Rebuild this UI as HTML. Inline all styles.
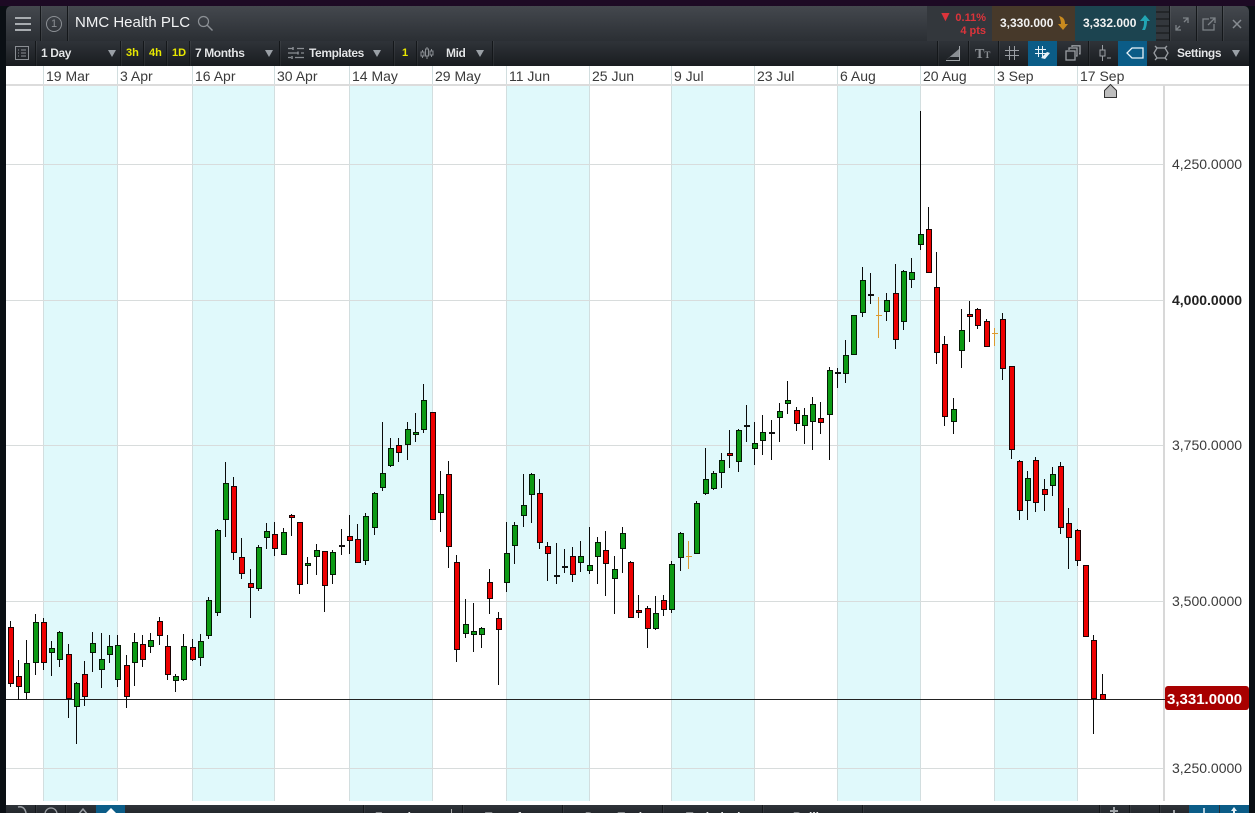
<!DOCTYPE html>
<html><head><meta charset="utf-8"><title>NMC Health PLC</title>
<style>
html,body{margin:0;padding:0;width:1255px;height:813px;overflow:hidden;background:#0a0f14;font-family:"Liberation Sans",sans-serif}
#top{position:absolute;left:0;top:0;width:1255px;height:6px;background:#1d0a24}
#hdr{position:absolute;left:6px;top:6px;width:1243px;height:35px;background:linear-gradient(#44484e,#2b2f34);border-radius:5px 5px 0 0;overflow:hidden}
#tb{position:absolute;left:6px;top:41px;width:1243px;height:25px;background:linear-gradient(#2f3339,#191c20)}
#plot{position:absolute;left:6px;top:66px;width:1243px;height:739px;background:#fff}
#bot{position:absolute;left:6px;top:805px;width:1243px;height:8px;background:linear-gradient(#2e3339,#24282d);overflow:hidden}
.a{position:absolute}
.sp{position:absolute;top:0;width:1px;height:100%;background:#14171a;box-shadow:1px 0 0 rgba(255,255,255,.06)}
.t{position:absolute;white-space:nowrap;color:#e4e6e8;font-size:12px;font-weight:bold;line-height:14px;letter-spacing:-.4px;text-shadow:0 0 1px #000}
.y{position:absolute;white-space:nowrap;color:#e8e800;font-size:11px;font-weight:bold;line-height:14px}
.blue{position:absolute;top:0;background:#0b5c87;height:100%}
.tri{position:absolute;width:0;height:0;border-left:4px solid transparent;border-right:4px solid transparent;border-top:7px solid #9aa0a6}
.b{position:absolute;top:5px;white-space:nowrap;color:#e8eaec;font-size:12px;font-weight:bold;line-height:14px}
svg{position:absolute;left:0;top:0;overflow:visible}
</style></head><body>
<div id="top"></div>

<div id="hdr">
 <div class="a" style="left:9px;top:11px;width:16px;height:2px;background:#a8acb0"></div>
 <div class="a" style="left:9px;top:17px;width:16px;height:2px;background:#a8acb0"></div>
 <div class="a" style="left:9px;top:23px;width:16px;height:2px;background:#a8acb0"></div>
 <div class="sp" style="left:34px"></div>
 <div class="a" style="left:40px;top:10px;width:14px;height:14px;border:1px solid #8c9095;border-radius:50%;color:#8c9095;font-size:11px;line-height:14px;text-align:center">1</div>
 <div class="sp" style="left:61px"></div>
 <div class="a" style="left:69px;top:8px;color:#f2f3f4;font-size:15px;line-height:18px;white-space:nowrap">NMC Health PLC</div>
 <svg width="20" height="20" style="left:191px;top:9px" viewBox="0 0 20 20"><circle cx="6.5" cy="6.5" r="5" fill="none" stroke="#8c9095" stroke-width="1.2"/><path d="M10 10l5.5 5.5" stroke="#8c9095" stroke-width="1.4" fill="none"/></svg>

 <div class="a" style="left:921px;top:0;width:65px;height:35px;background:#33373c"></div>
 <div class="a" style="left:986px;top:0;width:83px;height:35px;background:#47392a"></div>
 <div class="a" style="left:1069px;top:0;width:81px;height:35px;background:#1c4450"></div>
 <div class="a" style="left:1150px;top:0;width:13px;height:35px;background:repeating-linear-gradient(#33373c 0 5px,#232629 5px 7px)"></div>
 <div class="a" style="left:929px;top:4px;width:51px;text-align:right;color:#dc343b;font-size:11px;font-weight:bold;line-height:13px;white-space:nowrap"><span style="font-size:14px;line-height:13px">▼</span> 0.11%<br>4 pts</div>
 <div class="a" style="left:994px;top:10px;color:#f2f2f2;font-size:12px;font-weight:bold;line-height:15px;white-space:nowrap">3,330.000</div>
 <svg width="12" height="16" style="left:1051px;top:9px" viewBox="0 0 12 16"><path d="M2 1c4 1 6 3 6 8h3l-5 6-5-6h3c0-3-1-6-2-8z" fill="#c98a1e"/></svg>
 <div class="a" style="left:1077px;top:10px;color:#f2f2f2;font-size:12px;font-weight:bold;line-height:15px;white-space:nowrap">3,332.000</div>
 <svg width="12" height="16" style="left:1133px;top:9px" viewBox="0 0 12 16"><path d="M6 0l5 6H8c0 4-1 7-2 9H3c2-3 2-6 2-9H1z" fill="#22a6b4"/></svg>
 <div class="sp" style="left:1163px"></div><div class="sp" style="left:1190px"></div><div class="sp" style="left:1216px"></div>
 <svg width="14" height="14" style="left:1169px;top:11px" viewBox="0 0 14 14"><path d="M8 1h5v5M13 1L9 5M6 13H1V8M1 13l4-4" fill="none" stroke="#7d8287" stroke-width="1.3"/></svg>
 <svg width="14" height="14" style="left:1196px;top:11px" viewBox="0 0 14 14"><path d="M7 2H1v11h11V7M8 1h5v5M13 1L6 8" fill="none" stroke="#7d8287" stroke-width="1.3"/></svg>
 <svg width="10" height="10" style="left:1226px;top:13px" viewBox="0 0 10 10"><path d="M1 1l8 8M9 1l-8 8" stroke="#878c91" stroke-width="1.5"/></svg>
</div>

<div id="tb">
 <svg width="14" height="14" style="left:9px;top:5px" viewBox="0 0 14 14"><rect x=".5" y=".5" width="13" height="13" fill="none" stroke="#8a8e93"/><path d="M3 4h1M6 4h5M3 7h1M6 7h5M3 10h1M6 10h5" stroke="#8a8e93"/></svg>
 <div class="sp" style="left:29px"></div>
 <div class="t" style="left:35px;top:5px">1 Day</div>
 <div class="tri" style="left:102px;top:9px"></div>
 <div class="sp" style="left:114px"></div>
 <div class="y" style="left:120px;top:5px">3h</div>
 <div class="sp" style="left:137px"></div>
 <div class="y" style="left:143px;top:5px">4h</div>
 <div class="sp" style="left:160px"></div>
 <div class="y" style="left:166px;top:5px">1D</div>
 <div class="sp" style="left:183px"></div>
 <div class="t" style="left:189px;top:5px">7 Months</div>
 <div class="tri" style="left:259px;top:9px"></div>
 <div class="sp" style="left:273px"></div>
 <svg width="16" height="14" style="left:282px;top:5px" viewBox="0 0 16 14"><path d="M0 2.500h5M9 2.500h7M0 7h10M13 7h3M0 11.500h3M7 11.500h9" stroke="#8a8e93" stroke-width="1.200"/><path d="M5 1v3M10 5.500v3M4 10v3" stroke="#8a8e93" stroke-width="1.500"/></svg>
 <div class="t" style="left:303px;top:5px">Templates</div>
 <div class="tri" style="left:367px;top:9px"></div>
 <div class="sp" style="left:387px"></div>
 <div class="y" style="left:396px;top:5px">1</div>
 <div class="sp" style="left:410px"></div>
 <svg width="16" height="16" style="left:413px;top:4px" viewBox="0 0 16 16"><path d="M3.500 5v8M8 2v12M12.500 4v8" stroke="#8a8e93"/><rect x="2" y="7" width="3" height="4" fill="#2a2e33" stroke="#8a8e93"/><rect x="6.500" y="4" width="3" height="7" fill="#2a2e33" stroke="#8a8e93"/><rect x="11" y="6" width="3" height="4" fill="#2a2e33" stroke="#8a8e93"/></svg>
 <div class="t" style="left:440px;top:5px">Mid</div>
 <div class="tri" style="left:470px;top:9px"></div>
 <div class="sp" style="left:486px"></div>

 <div class="sp" style="left:931px"></div><div class="sp" style="left:962px"></div><div class="sp" style="left:992px"></div>
 <div class="blue" style="left:1022px;width:29px"></div>
 <div class="sp" style="left:1082px"></div>
 <div class="blue" style="left:1112px;width:29px"></div>
 <svg width="16" height="16" style="left:939px;top:4px" viewBox="0 0 16 16"><path d="M1 15L14 4v8H5z" fill="#8a8e93"/><path d="M1 15.500h14M14.500 1v14" fill="none" stroke="#a0a4a8"/></svg>
 <div class="a" style="left:969px;top:5px;color:#8c9095;font-size:14px;font-weight:bold;font-family:'Liberation Serif',serif;line-height:17px;white-space:nowrap">T<span style="font-size:9px">T</span></div>
 <svg width="16" height="16" style="left:998px;top:4px" viewBox="0 0 16 16"><path d="M5.500 1v14M10.500 1v14M1 5.500h14M1 10.500h14" stroke="#9a9ea3"/></svg>
 <svg width="18" height="16" style="left:1028px;top:4px" viewBox="0 0 18 16"><path d="M4.500 1v11M8.500 1v11M1 4.500h11M1 8.500h11" stroke="#e8f2f8"/><path d="M7 13l6-6 3 1-5 6z" fill="#e8f2f8"/></svg>
 <svg width="16" height="16" style="left:1059px;top:4px" viewBox="0 0 16 16"><rect x="1" y="6" width="9" height="9" fill="none" stroke="#9a9ea3" stroke-width="1.300"/><path d="M4 5V3h8v8h-1M7 2V.8h8v8h-1" fill="none" stroke="#9a9ea3" stroke-width="1.300"/></svg>
 <svg width="16" height="18" style="left:1091px;top:3px" viewBox="0 0 16 18"><path d="M5.500 1v16" stroke="#9a9ea3"/><rect x="3" y="6" width="5" height="6" fill="#2a2e33" stroke="#9a9ea3"/><path d="M10 14h4" stroke="#9a9ea3"/></svg>
 <svg width="20" height="14" style="left:1119px;top:5px" viewBox="0 0 20 14"><path d="M18 2H7L2 7l5 5h11z" fill="none" stroke="#e8f2f8" stroke-width="1.300"/></svg>
 <svg width="16" height="16" style="left:1147px;top:4px" viewBox="0 0 16 16"><path d="M4 3h8l3 5-3 5H4L1 8z" fill="none" stroke="#9a9ea3" stroke-width="1.300"/><path d="M4 3L2 1M12 3l2-2M4 13l-2 2M12 13l2 2" stroke="#9a9ea3" stroke-width="1.300"/></svg>
 <div class="t" style="left:1171px;top:5px">Settings</div>
 <div class="tri" style="left:1226px;top:9px"></div>
</div>

<div id="plot"></div>
<svg width="1255" height="813" viewBox="0 0 1255 813" style="left:0;top:0">
 <g fill="#e0f9fb">
  <rect x="43" y="85" width="75" height="716"/><rect x="192" y="85" width="83" height="716"/><rect x="349" y="85" width="84" height="716"/><rect x="506" y="85" width="84" height="716"/><rect x="671" y="85" width="84" height="716"/><rect x="837" y="85" width="84" height="716"/><rect x="994" y="85" width="84" height="716"/>
 </g>
 <path d="M43.500 66V801M117.500 66V801M192.500 66V801M274.500 66V801M349.500 66V801M432.500 66V801M506.500 66V801M589.500 66V801M671.500 66V801M754.500 66V801M837.500 66V801M920.500 66V801M994.500 66V801M1077.500 66V801" stroke="#d2dedf" fill="none"/>
 <path d="M6 164.500H1164M6 300.500H1164M6 445.500H1164M6 601.500H1164M6 768.500H1164" stroke="#d8dcdc" fill="none"/>
 <rect x="6" y="84" width="1243" height="2" fill="#dcdcdc"/>
 <rect x="1163" y="85" width="2" height="716" fill="#d8d8d8"/>
 <path d="M6 699.500H1165" stroke="#222" fill="none"/>

 <path fill="none" stroke="#0a0a0a" d="M10.500 621V687M18.500 660V700M26.500 640V699M35.500 614V675M43.500 618V670M51.500 641V676M59.500 631V667M68.500 644V718M76.500 682V744M84.500 661V706M92.500 632V672M101.500 633V688M109.500 635V663M117.500 635V687M126.500 655V708M134.500 633V686M142.500 635V667M150.500 633V653M159.500 617V645M167.500 635V680M175.500 674V692M183.500 634V681M192.500 639V661M200.500 634V666M208.500 597V639M217.500 529V616M225.500 462V537M233.500 477V560M241.500 538V579M250.500 569V618M258.500 545V591M266.500 523V549M274.500 522V556M283.500 528V555M291.500 514V536M299.500 522V594M307.500 557V584M316.500 544V575M324.500 551V612M332.500 550V584M341.500 529V555M349.500 515V554M357.500 524V563M365.500 513V565M374.500 492V535M382.500 422V491M390.500 438V467M398.500 438V462M407.500 422V460M415.500 413V442M423.500 384V433M432.500 412V520M440.500 471V532M448.500 461V568M456.500 555V662M465.500 599V638M473.500 603V652M481.500 627V648M489.500 569V614M498.500 612V685M506.500 522V592M514.500 522V564M523.500 474V527M531.500 473V523M539.500 479V549M547.500 542V581M556.500 543V584M564.500 549V573M572.500 547V582M580.500 541V572M589.500 527V574M597.500 537V584M605.500 531V596M614.500 556V614M622.500 527V573M630.500 561V618M638.500 595V618M647.500 606V648M655.500 596V630M663.500 595V616M671.500 561V613M680.500 532V571M696.500 501V554M705.500 448V495M713.500 471V490M721.500 453V488M729.500 430V468M738.500 429V472M746.500 405V442M754.500 422V465M762.500 415V455M771.500 420V460M779.500 403V442M787.500 381V414M796.500 407V431M804.500 408V444M812.500 397V450M820.500 402V434M829.500 367V460M837.500 368V388M845.500 340V383M853.500 315V355M862.500 267V317M870.500 273V304M886.500 293V321M895.500 264V349M903.500 270V330M911.500 258V288M920.500 111V250M928.500 207V273M936.500 252V364M944.500 336V426M953.500 398V434M961.500 309V368M969.500 301V342M977.500 308V329M986.500 319V347M1002.500 313V380M1011.500 366V459M1019.500 460V520M1027.500 471V520M1035.500 457V512M1044.500 479V511M1052.500 467V496M1060.500 462V534M1068.500 508V569M1077.500 529V566M1085.500 565V637M1093.500 635V734M1102.500 674V700"/>

 <path fill="none" stroke="#dc9a30" d="M688.500 541V569M686 556.500H692M878.500 297V338M876 315.500H882M994.500 328V346M992 333.500H998"/>

 <path fill="#ee0000" stroke="#1a0505" d="M8.500 627.500h5V683.500h-5zM16.500 676.500h5V686.500h-5zM41.500 622.500h5V662.500h-5zM66.500 654.500h5V698.500h-5zM82.500 674.500h5V696.500h-5zM124.500 665.500h5V696.500h-5zM140.500 644.500h5V659.500h-5zM157.500 621.500h5V635.500h-5zM165.500 646.500h5V674.500h-5zM190.500 647.500h5V659.500h-5zM231.500 486.500h5V552.500h-5zM239.500 557.500h5V573.500h-5zM248.500 583.500h5V587.500h-5zM272.500 534.500h5V548.500h-5zM289.500 515.500h5V517.500h-5zM297.500 522.500h5V584.500h-5zM322.500 551.500h5V585.500h-5zM347.500 536.500h5V540.500h-5zM355.500 539.500h5V562.500h-5zM396.500 445.500h5V452.500h-5zM430.500 412.500h5V519.500h-5zM446.500 474.500h5V546.500h-5zM454.500 562.500h5V649.500h-5zM487.500 582.500h5V598.500h-5zM496.500 618.500h5V629.500h-5zM537.500 493.500h5V542.500h-5zM545.500 546.500h5V553.500h-5zM570.500 556.500h5V574.500h-5zM603.500 550.500h5V563.500h-5zM628.500 562.500h5V617.500h-5zM636.500 610.500h5V612.500h-5zM645.500 608.500h5V628.500h-5zM661.500 600.500h5V609.500h-5zM727.500 453.500h5V455.500h-5zM794.500 410.500h5V423.500h-5zM818.500 418.500h5V422.500h-5zM893.500 293.500h5V339.500h-5zM926.500 229.500h5V272.500h-5zM934.500 287.500h5V352.500h-5zM942.500 344.500h5V416.500h-5zM967.500 314.500h5V316.500h-5zM975.500 309.500h5V325.500h-5zM984.500 321.500h5V346.500h-5zM1000.500 319.500h5V368.500h-5zM1009.500 366.500h5V449.500h-5zM1017.500 461.500h5V510.500h-5zM1033.500 460.500h5V502.500h-5zM1042.500 489.500h5V494.500h-5zM1058.500 466.500h5V527.500h-5zM1066.500 523.500h5V537.500h-5zM1075.500 530.500h5V560.500h-5zM1083.500 565.500h5V636.500h-5zM1091.500 640.500h5V698.500h-5zM1100.500 694.500h5V699.500h-5z"/>

 <path fill="#0c9a14" stroke="#051a05" d="M24.500 663.500h5V692.500h-5zM33.500 622.500h5V662.500h-5zM49.500 648.500h5V652.500h-5zM57.500 632.500h5V659.500h-5zM74.500 683.500h5V706.500h-5zM90.500 643.500h5V652.500h-5zM99.500 659.500h5V669.500h-5zM107.500 646.500h5V654.500h-5zM115.500 645.500h5V679.500h-5zM132.500 642.500h5V662.500h-5zM148.500 640.500h5V646.500h-5zM173.500 676.500h5V680.500h-5zM181.500 646.500h5V679.500h-5zM198.500 641.500h5V657.500h-5zM206.500 600.500h5V635.500h-5zM215.500 530.500h5V612.500h-5zM223.500 483.500h5V519.500h-5zM256.500 547.500h5V588.500h-5zM264.500 531.500h5V537.500h-5zM281.500 532.500h5V554.500h-5zM305.500 563.500h5V565.500h-5zM314.500 550.500h5V556.500h-5zM330.500 552.500h5V574.500h-5zM363.500 516.500h5V560.500h-5zM372.500 493.500h5V527.500h-5zM380.500 473.500h5V487.500h-5zM388.500 448.500h5V465.500h-5zM405.500 429.500h5V444.500h-5zM413.500 432.500h5V434.500h-5zM421.500 400.500h5V429.500h-5zM438.500 494.500h5V512.500h-5zM463.500 624.500h5V633.500h-5zM471.500 631.500h5V634.500h-5zM479.500 628.500h5V634.500h-5zM504.500 553.500h5V582.500h-5zM512.500 525.500h5V545.500h-5zM521.500 505.500h5V515.500h-5zM529.500 474.500h5V494.500h-5zM578.500 556.500h5V562.500h-5zM587.500 565.500h5V570.500h-5zM595.500 542.500h5V556.500h-5zM612.500 569.500h5V578.500h-5zM620.500 533.500h5V548.500h-5zM653.500 613.500h5V628.500h-5zM669.500 564.500h5V609.500h-5zM678.500 533.500h5V557.500h-5zM694.500 503.500h5V553.500h-5zM703.500 479.500h5V493.500h-5zM711.500 473.500h5V488.500h-5zM719.500 460.500h5V472.500h-5zM736.500 430.500h5V461.500h-5zM752.500 443.500h5V448.500h-5zM760.500 432.500h5V440.500h-5zM777.500 411.500h5V417.500h-5zM785.500 400.500h5V403.500h-5zM802.500 415.500h5V425.500h-5zM810.500 404.500h5V421.500h-5zM827.500 370.500h5V414.500h-5zM843.500 355.500h5V373.500h-5zM851.500 315.500h5V354.500h-5zM860.500 280.500h5V312.500h-5zM884.500 300.500h5V311.500h-5zM901.500 271.500h5V321.500h-5zM909.500 272.500h5V279.500h-5zM918.500 234.500h5V244.500h-5zM951.500 409.500h5V421.500h-5zM959.500 330.500h5V350.500h-5zM1025.500 478.500h5V500.500h-5zM1050.500 474.500h5V485.500h-5z"/>

 <path fill="#111" stroke="#111" d="M339.500 545.500h5V546.500h-5zM554.500 575.500h5V576.500h-5zM562.500 566.500h5V567.500h-5zM744.500 425.500h5V426.500h-5zM769.500 432.500h5V433.500h-5zM835.500 372.500h5V373.500h-5zM868.500 294.500h5V295.500h-5z"/>

 <path d="M1104.500 97.500V90.500L1110.500 84.500L1116.500 90.500V97.500Z" fill="#bdbdbd" stroke="#333"/>

 <g font-family="'Liberation Sans',sans-serif" font-size="14" fill="#3a3a3a">
  <text x="46" y="81">19 Mar</text><text x="120" y="81">3 Apr</text><text x="195" y="81">16 Apr</text><text x="277" y="81">30 Apr</text><text x="352" y="81">14 May</text><text x="435" y="81">29 May</text><text x="509" y="81">11 Jun</text><text x="592" y="81">25 Jun</text><text x="674" y="81">9 Jul</text><text x="757" y="81">23 Jul</text><text x="840" y="81">6 Aug</text><text x="923" y="81">20 Aug</text><text x="997" y="81">3 Sep</text><text x="1080" y="81">17 Sep</text>
  <text x="1172" y="169">4,250.0000</text><text x="1172" y="450">3,750.0000</text><text x="1172" y="606">3,500.0000</text><text x="1172" y="773">3,250.0000</text>
  <text x="1172" y="305" font-weight="bold" fill="#222">4,000.0000</text>
 </g>
 <rect x="1165" y="686" width="84" height="24" rx="3" fill="#a80000"/>
 <text x="1167" y="704" font-family="'Liberation Sans',sans-serif" font-size="15" font-weight="bold" fill="#fff">3,331.0000</text>
</svg>

<div id="bot">
 <div class="sp" style="left:29px"></div><div class="sp" style="left:59px"></div>
 <div class="blue" style="left:90px;width:29px"></div>
 <svg width="14" height="8" style="left:8px;top:0" viewBox="0 0 14 8"><path d="M4 2c4-1 7 1 8 6" fill="none" stroke="#9a9ea3" stroke-width="1.500"/></svg>
 <svg width="14" height="8" style="left:38px;top:2px" viewBox="0 0 14 8"><circle cx="7" cy="7" r="6" fill="none" stroke="#9a9ea3" stroke-width="1.300"/></svg>
 <svg width="14" height="8" style="left:70px;top:2px" viewBox="0 0 14 8"><path d="M2 8l5-6 5 6" fill="none" stroke="#9a9ea3" stroke-width="1.500"/></svg>
 <svg width="14" height="8" style="left:98px;top:2px" viewBox="0 0 14 8"><path d="M2 6l5-5 5 5z" fill="#fff"/></svg>
 <div class="sp" style="left:357px"></div><div class="sp" style="left:456px"></div><div class="sp" style="left:556px"></div><div class="sp" style="left:656px"></div><div class="sp" style="left:756px"></div><div class="sp" style="left:856px"></div>
 <div class="b" style="left:369px">Favorites</div>
 <div class="a" style="left:445px;top:4px;width:1px;height:4px;background:#aaa"></div>
 <div class="b" style="left:479px">Transform</div>
 <div class="b" style="left:579px">Draw Tools</div>
 <div class="b" style="left:680px">Technical</div>
 <div class="b" style="left:787px">Bollinger</div>
 <div class="sp" style="left:1093px"></div><div class="sp" style="left:1123px"></div><div class="sp" style="left:1153px"></div>
 <div class="blue" style="left:1183px;width:30px"></div><div class="blue" style="left:1214px;width:29px"></div>
 <svg width="10" height="8" style="left:1103px;top:2px" viewBox="0 0 10 8"><path d="M5 0v8M1 4h8" stroke="#a0a4a8" stroke-width="2"/></svg>
 <svg width="4" height="8" style="left:1166px;top:5px" viewBox="0 0 4 8"><path d="M2 0v8" stroke="#a0a4a8" stroke-width="2"/></svg>
 <svg width="4" height="8" style="left:1196px;top:3px" viewBox="0 0 4 8"><path d="M2 0v8" stroke="#e8f2f8" stroke-width="1.500"/></svg>
 <svg width="8" height="8" style="left:1224px;top:2px" viewBox="0 0 8 8"><path d="M4 0L1 4h2v4h2V4h2z" fill="#e8f2f8"/></svg>
</div>
</body></html>
